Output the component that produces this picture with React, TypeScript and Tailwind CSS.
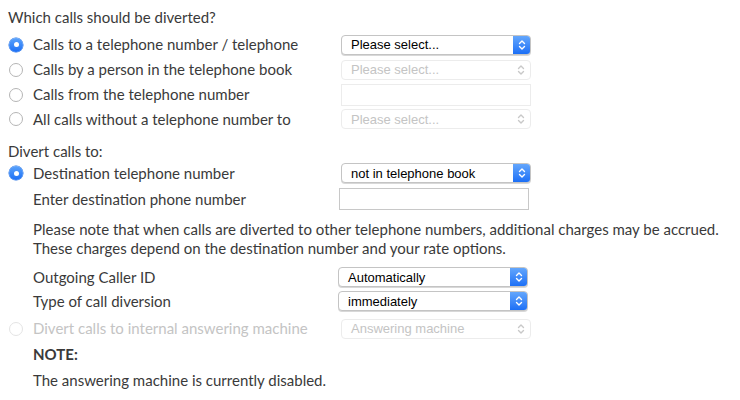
import React from "react";

const FONT = "font-['Lato','Noto_Sans',sans-serif]";

function Radio({ checked, disabled }: { checked?: boolean; disabled?: boolean }) {
  if (checked) {
    return (
      <span className="flex h-[14px] w-[14px] shrink-0 items-center justify-center rounded-full bg-gradient-to-b from-[#5aa2fb] to-[#1a6ef5] shadow-[0_0_0_0.5px_#1f6ce0]">
        <span className="h-[5px] w-[5px] rounded-full bg-white" />
      </span>
    );
  }
  return (
    <span
      className={
        "h-[14px] w-[14px] shrink-0 rounded-full border bg-white " +
        (disabled ? "border-[#e4e4e4]" : "border-[#b5b5b5]")
      }
    />
  );
}

function Chevrons({ color }: { color: string }) {
  return (
    <svg width="8" height="12" viewBox="0 0 8 12" fill="none" stroke={color} strokeWidth="1.4" strokeLinecap="round" strokeLinejoin="round">
      <path d="M1.5 4.5 L4 2 L6.5 4.5" />
      <path d="M1.5 7.5 L4 10 L6.5 7.5" />
    </svg>
  );
}

function Select({ value, disabled, className = "" }: { value: string; disabled?: boolean; className?: string }) {
  if (disabled) {
    return (
      <div className={"flex h-[20px] w-[190px] items-center justify-between rounded-[4px] border border-[#ececec] bg-white pl-[9px] pr-[5px] " + className}>
        <span className="font-['Liberation_Sans',Arial,sans-serif] text-[13px] text-[#c4c4c4]">{value}</span>
        <Chevrons color="#c8c8c8" />
      </div>
    );
  }
  return (
    <div className={"flex h-[20px] w-[190px] items-stretch overflow-hidden rounded-[4px] border border-[#c4c4c4] bg-white shadow-[0_1px_0_#d8d8d8] " + className}>
      <span className="flex flex-1 items-center pl-[9px] font-['Liberation_Sans',Arial,sans-serif] text-[13px] text-black">{value}</span>
      <span className="flex w-[17px] items-center justify-center bg-gradient-to-b from-[#63a6fc] to-[#1b6ff6]">
        <Chevrons color="#ffffff" />
      </span>
    </div>
  );
}

function Input({ disabled, className = "" }: { disabled?: boolean; className?: string }) {
  return (
    <div
      className={
        "h-[22px] w-[190px] border bg-white " +
        (disabled ? "border-[#ececec]" : "border-[#c8c8c8]") +
        " " +
        className
      }
    />
  );
}

export default function App() {
  return (
    <div className={`${FONT} h-[400px] w-[740px] bg-white px-2 text-[15px] leading-[21px] text-[#3a3a3a]`}>
      <div className="flex h-[32px] items-end pb-[4px]">Which calls should be diverted?</div>

      <div className="flex h-[25px] items-center">
        <span className="flex w-[25px] pl-[1px]"><Radio checked /></span>
        <span className="w-[308px]">Calls to a telephone number / telephone</span>
        <Select value="Please select..." />
      </div>
      <div className="flex h-[25px] items-center">
        <span className="flex w-[25px] pl-[1px]"><Radio /></span>
        <span className="w-[308px]">Calls by a person in the telephone book</span>
        <Select value="Please select..." disabled />
      </div>
      <div className="flex h-[25px] items-center">
        <span className="flex w-[25px] pl-[1px]"><Radio /></span>
        <span className="w-[308px]">Calls from the telephone number</span>
        <Input disabled />
      </div>
      <div className="flex h-[24px] items-center">
        <span className="flex w-[25px] pl-[1px]"><Radio /></span>
        <span className="w-[308px]">All calls without a telephone number to</span>
        <Select value="Please select..." disabled />
      </div>

      <div className="flex h-[31px] items-end">Divert calls to:</div>
      <div className="flex h-[22px] items-center">
        <span className="flex w-[25px] pl-[1px]"><Radio checked /></span>
        <span className="w-[308px]">Destination telephone number</span>
        <Select value="not in telephone book" />
      </div>
      <div className="flex h-[30px] items-center pl-[25px]">
        <span className="w-[306px]">Enter destination phone number</span>
        <Input />
      </div>
      <div className="whitespace-nowrap pl-[25px] pt-[6px] leading-[19px]">
        <p>Please note that when calls are diverted to other telephone numbers, additional charges may be accrued.</p>
        <p>These charges depend on the destination number and your rate options.</p>
      </div>
      <div className="mt-[7px] flex h-[24px] items-center pl-[25px]">
        <span className="w-[305px]">Outgoing Caller ID</span>
        <Select value="Automatically" />
      </div>
      <div className="flex h-[24px] items-center pl-[25px]">
        <span className="w-[305px]">Type of call diversion</span>
        <Select value="immediately" />
      </div>
      <div className="mt-[2px] flex h-[27px] items-center text-[#c4c4c4]">
        <span className="flex w-[25px] pl-[1px]"><Radio disabled /></span>
        <span className="w-[308px]">Divert calls to internal answering machine</span>
        <Select value="Answering machine" disabled />
      </div>
      <div className="flex h-[24px] items-center pl-[25px] font-bold">NOTE:</div>
      <div className="flex h-[29px] items-center pl-[25px]">The answering machine is currently disabled.</div>
    </div>
  );
}
